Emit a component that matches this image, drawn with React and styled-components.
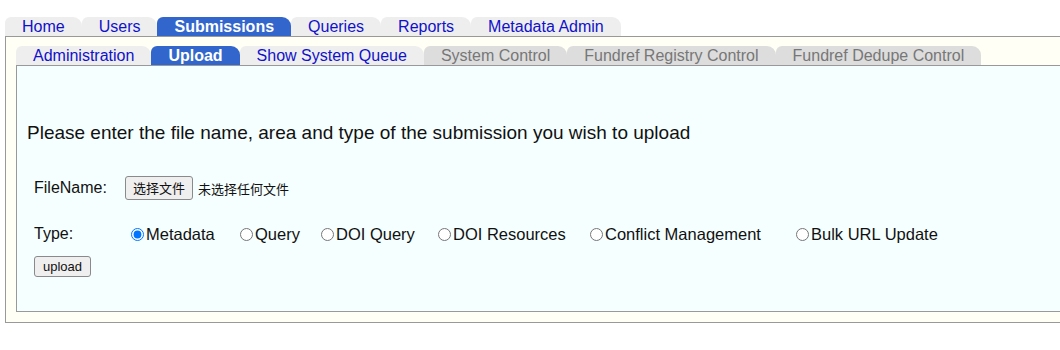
import React from "react";
import styled, { createGlobalStyle } from "styled-components";

const Global = createGlobalStyle`
  html, body { margin: 0; padding: 0; background: #fff; }
  body { font-family: "Liberation Sans", Arial, sans-serif; color: #111; }
`;

const Page = styled.div`
  padding: 17px 0 0 5px;
`;

const TabRow = styled.div`
  display: flex;
  align-items: flex-end;
  height: 19px;
`;

const Tab = styled.a`
  display: block;
  height: 19px;
  padding: 0 17px;
  box-sizing: border-box;
  font-size: 16px;
  line-height: 19px;
  white-space: nowrap;
  text-decoration: none;
  border-radius: 6px 9px 0 0;
  background: ${(p) => (p.$active ? "#3366cc" : p.$disabled ? "#dddddd" : "#eeeeee")};
  color: ${(p) => (p.$active ? "#ffffff" : p.$disabled ? "#777777" : "#1111cc")};
  font-weight: ${(p) => (p.$active ? "bold" : "normal")};
`;

const Frame = styled.div`
  border: 1px solid #999;
  border-right: none;
  background: #fffff5;
  padding: 9px 0 10px 10px;
`;

const Panel = styled.div`
  box-sizing: border-box;
  height: 247px;
  border: 1px solid #999;
  border-right: none;
  background: #f5ffff;
  padding: 0 0 0 10px;
`;

const Intro = styled.p`
  margin: 56px 0 0;
  font-size: 19px;
  line-height: 22px;
  color: #111;
`;

const Form = styled.div`
  display: grid;
  grid-template-columns: 91px 1fr;
  grid-template-rows: 24px 20px;
  row-gap: 24px;
  align-items: center;
  margin: 32px 0 0 7px;
`;

const FieldLabel = styled.span`
  font-size: 16px;
  line-height: 20px;
`;

const FilePicker = styled.label`
  display: flex;
  align-items: center;
  gap: 5px;
  font-family: "Liberation Sans", "Noto Sans CJK SC", sans-serif;
  font-size: 13px;
  cursor: pointer;
  input { display: none; }
`;

const NativeButton = styled.span`
  display: inline-flex;
  align-items: center;
  justify-content: center;
  box-sizing: border-box;
  height: ${(p) => p.$h}px;
  padding: 0 ${(p) => p.$px}px;
  border: 1px solid #8a8a8a;
  border-radius: 3px;
  background: #efefef;
  color: #111;
  font-family: "Liberation Sans", "Noto Sans CJK SC", sans-serif;
  font-size: 13px;
  line-height: 1;
`;

const SubmitRow = styled.div`
  margin: 12px 0 0 7px;
  display: flex;
`;

const RadioGroup = styled.div`
  display: flex;
  align-items: center;
  padding-left: 6px;
`;

const Option = styled.label`
  display: flex;
  align-items: center;
  flex: none;
  width: ${(p) => (p.$w ? `${p.$w}px` : "auto")};
  font-size: 16.5px;
  line-height: 20px;
  white-space: nowrap;
`;

const Radio = styled.input`
  width: 13px;
  height: 13px;
  margin: 0 2px 0 0;
`;

const topTabs = [
  { label: "Home" },
  { label: "Users" },
  { label: "Submissions", active: true },
  { label: "Queries" },
  { label: "Reports" },
  { label: "Metadata Admin" },
];

const subTabs = [
  { label: "Administration" },
  { label: "Upload", active: true },
  { label: "Show System Queue" },
  { label: "System Control", disabled: true },
  { label: "Fundref Registry Control", disabled: true },
  { label: "Fundref Dedupe Control", disabled: true },
];

const types = [
  { label: "Metadata", w: 109 },
  { label: "Query", w: 81 },
  { label: "DOI Query", w: 117 },
  { label: "DOI Resources", w: 152 },
  { label: "Conflict Management", w: 206 },
  { label: "Bulk URL Update" },
];

export default function App() {
  const [type, setType] = React.useState("Metadata");
  return (
    <>
      <Global />
      <Page>
        <TabRow>
          {topTabs.map((t) => (
            <Tab key={t.label} $active={t.active}>{t.label}</Tab>
          ))}
        </TabRow>
        <Frame>
          <TabRow>
            {subTabs.map((t) => (
              <Tab key={t.label} $active={t.active} $disabled={t.disabled}>{t.label}</Tab>
            ))}
          </TabRow>
          <Panel>
            <Intro>Please enter the file name, area and type of the submission you wish to upload</Intro>
            <Form>
              <FieldLabel>FileName:</FieldLabel>
              <FilePicker>
                <input type="file" />
                <NativeButton $h={24} $px={7}>选择文件</NativeButton>
                <span>未选择任何文件</span>
              </FilePicker>
              <FieldLabel>Type:</FieldLabel>
              <RadioGroup>
                {types.map((t) => (
                  <Option key={t.label} $w={t.w}>
                    <Radio
                      type="radio"
                      name="type"
                      checked={type === t.label}
                      onChange={() => setType(t.label)}
                    />
                    {t.label}
                  </Option>
                ))}
              </RadioGroup>
            </Form>
            <SubmitRow>
              <NativeButton as="button" $h={21} $px={8}>upload</NativeButton>
            </SubmitRow>
          </Panel>
        </Frame>
      </Page>
    </>
  );
}
